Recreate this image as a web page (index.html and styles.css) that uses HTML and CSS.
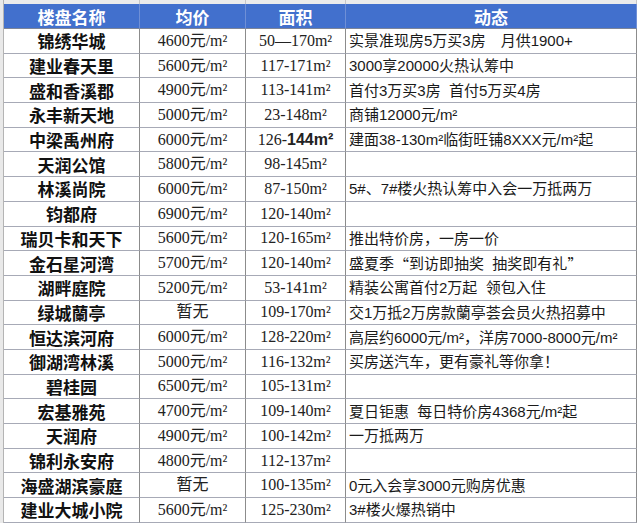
FILE: index.html
```html
<!DOCTYPE html>
<html lang="zh">
<head>
<meta charset="utf-8">
<title>楼盘</title>
<link rel="stylesheet" href="styles.css">
</head>
<body>
<div class="page">
  <div class="gutter"></div>
  <div class="sheet">
    <div class="top"></div><div class="top"></div><div class="top"></div><div class="top"></div>
    <div class="hd">楼盘名称</div><div class="hd">均价</div><div class="hd">面积</div><div class="hd">动态</div>

    <div class="c name">锦绣华城</div><div class="c num">4600元/m²</div><div class="c num">50—170m²</div><div class="c dyn">实景准现房5万买3房　月供1900+</div>
    <div class="c name">建业春天里</div><div class="c num">5600元/m²</div><div class="c num">117-171m²</div><div class="c dyn">3000享20000火热认筹中</div>
    <div class="c name">盛和香溪郡</div><div class="c num">4900元/m²</div><div class="c num">113-141m²</div><div class="c dyn">首付3万买3房&nbsp;&nbsp;首付5万买4房</div>
    <div class="c name">永丰新天地</div><div class="c num">5000元/m²</div><div class="c num">23-148m²</div><div class="c dyn">商铺12000元/m²</div>
    <div class="c name">中梁禹州府</div><div class="c num">6000元/m²</div><div class="c num">126-<b class="hl">144m²</b></div><div class="c dyn">建面38-130m²临街旺铺8XXX元/m²起</div>
    <div class="c name">天润公馆</div><div class="c num">5800元/m²</div><div class="c num">98-145m²</div><div class="c dyn"></div>
    <div class="c name">林溪尚院</div><div class="c num">6000元/m²</div><div class="c num">87-150m²</div><div class="c dyn">5#、7#楼火热认筹中入会一万抵两万</div>
    <div class="c name">钧都府</div><div class="c num">6900元/m²</div><div class="c num">120-140m²</div><div class="c dyn"></div>
    <div class="c name">瑞贝卡和天下</div><div class="c num">5600元/m²</div><div class="c num">120-165m²</div><div class="c dyn">推出特价房，一房一价</div>
    <div class="c name">金石星河湾</div><div class="c num">5700元/m²</div><div class="c num">120-140m²</div><div class="c dyn">盛夏季<span class="cjk">“</span>到访即抽奖&nbsp;&nbsp;抽奖即有礼<span class="cjk">”</span></div>
    <div class="c name">湖畔庭院</div><div class="c num">5200元/m²</div><div class="c num">53-141m²</div><div class="c dyn">精装公寓首付2万起&nbsp;&nbsp;领包入住</div>
    <div class="c name">绿城蘭亭</div><div class="c num">暂无</div><div class="c num">109-170m²</div><div class="c dyn">交1万抵2万房款蘭亭荟会员火热招募中</div>
    <div class="c name">恒达滨河府</div><div class="c num">6000元/m²</div><div class="c num">128-220m²</div><div class="c dyn">高层约6000元/m²，洋房7000-8000元/m²</div>
    <div class="c name">御湖湾林溪</div><div class="c num">5000元/m²</div><div class="c num">116-132m²</div><div class="c dyn">买房送汽车，更有豪礼等你拿！</div>
    <div class="c name">碧桂园</div><div class="c num">6500元/m²</div><div class="c num">105-131m²</div><div class="c dyn"></div>
    <div class="c name">宏基雅苑</div><div class="c num">4700元/m²</div><div class="c num">109-140m²</div><div class="c dyn">夏日钜惠&nbsp;&nbsp;每日特价房4368元/m²起</div>
    <div class="c name">天润府</div><div class="c num">4900元/m²</div><div class="c num">100-142m²</div><div class="c dyn">一万抵两万</div>
    <div class="c name">锦利永安府</div><div class="c num">4800元/m²</div><div class="c num">112-137m²</div><div class="c dyn"></div>
    <div class="c name">海盛湖滨豪庭</div><div class="c num">暂无</div><div class="c num">100-135m²</div><div class="c dyn">0元入会享3000元购房优惠</div>
    <div class="c name">建业大城小院</div><div class="c num">5600元/m²</div><div class="c num">125-230m²</div><div class="c dyn">3#楼火爆热销中</div>
  </div>
</div>
</body>
</html>
```

FILE: styles.css
```css
html, body {
  margin: 0;
  padding: 0;
  background: #ffffff;
}

.page {
  display: flex;
  align-items: flex-start;
}

.gutter {
  width: 3px;
  height: 523px;
  background: #e9e9e9;
  flex: none;
}

.sheet {
  display: grid;
  grid-template-columns: 136px 106px 100px 291px;
  grid-template-rows: 4px 25px repeat(20, 24.7px);
  border-left: 1px solid #b4b4b4;
  font-family: "Noto Sans CJK SC", sans-serif;
  color: #111;
}

.sheet > div {
  box-sizing: border-box;
  border-right: 1px solid #8c8c8c;
  white-space: nowrap;
  overflow: hidden;
}

.top {
  background: #ebebeb;
  border-right-color: #c6c6c6 !important;
}

.hd {
  background: #4270cd;
  color: #ffffff;
  font-weight: 700;
  font-size: 17px;
  display: flex;
  align-items: center;
  justify-content: center;
  border-bottom: 1px solid #7d8598;
  border-right-color: #6f8fd6 !important;
  line-height: 1;
}

.c {
  display: flex;
  align-items: center;
  border-bottom: 1px solid #a7aab6;
  line-height: 1;
}

.name {
  justify-content: center;
  font-weight: 700;
  font-size: 17px;
  color: #111;
}

.num {
  justify-content: center;
  font-family: "Liberation Serif", "Noto Sans CJK SC", serif;
  font-size: 16px;
  color: #222;
}

.hl {
  font-family: "Liberation Sans", sans-serif;
  font-weight: 700;
  font-size: 16px;
}

.dyn {
  justify-content: flex-start;
  padding-left: 3px;
  font-family: "Liberation Sans", "Noto Sans CJK SC", sans-serif;
  font-size: 15px;
  color: #1a1a1a;
}

.cjk {
  font-family: "Noto Sans CJK SC", sans-serif;
}
```
